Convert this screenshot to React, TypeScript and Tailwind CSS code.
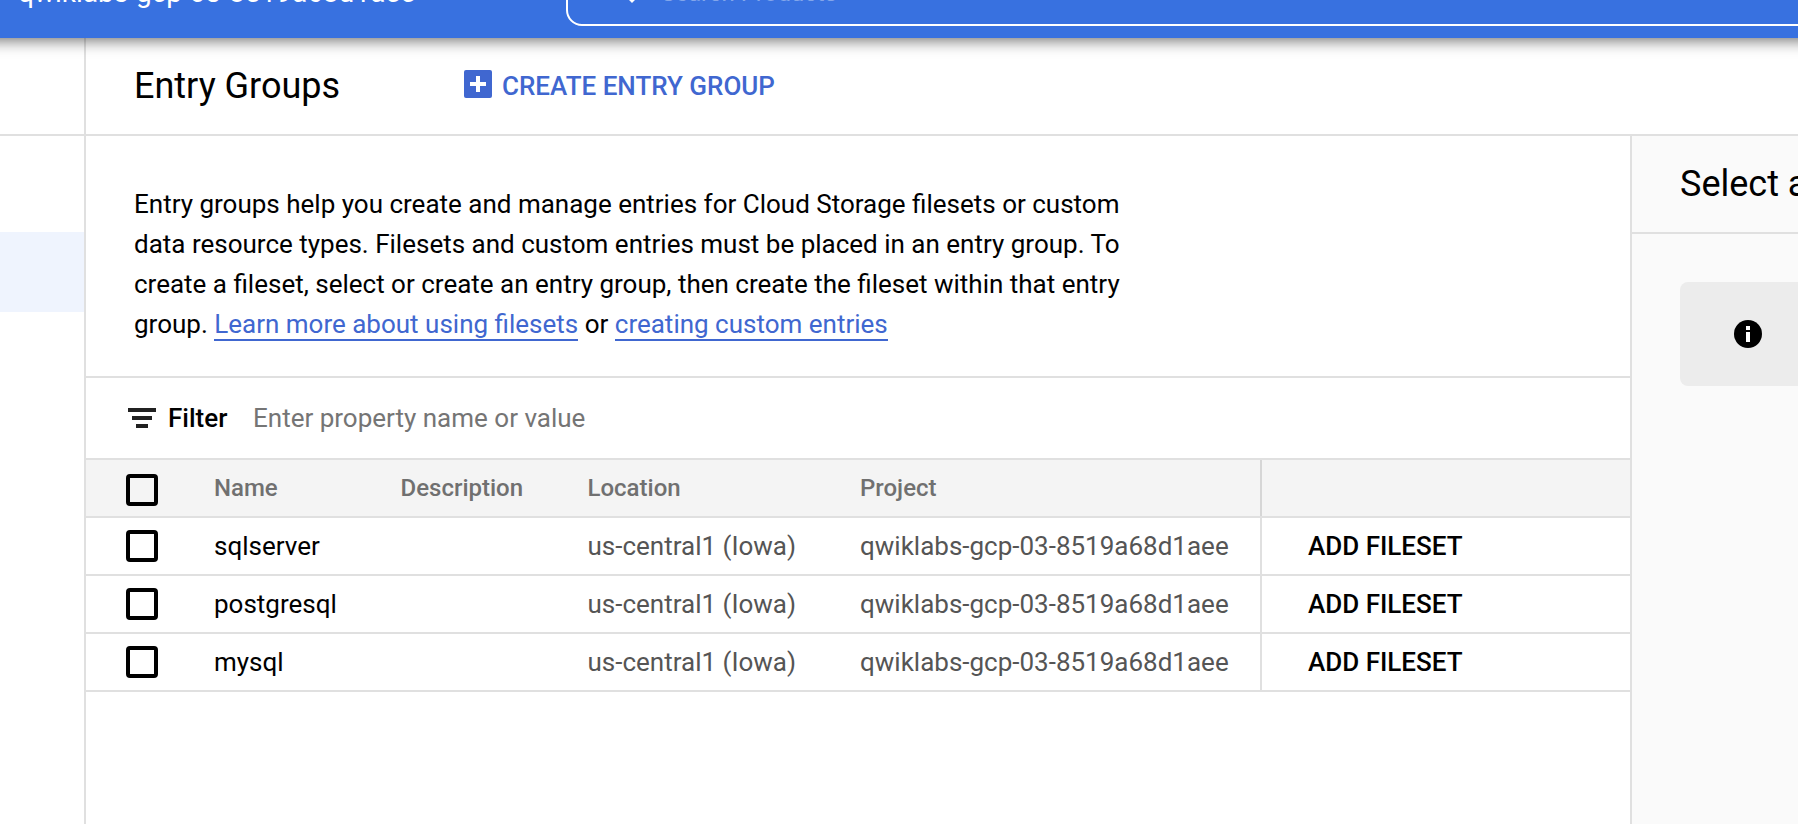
const rows = ["sqlserver", "postgresql", "mysql"];

function Checkbox() {
  return (
    <span
      role="checkbox"
      aria-checked="false"
      className="block size-8 shrink-0 rounded-[4px] border-4 border-black"
    />
  );
}

function TopBar() {
  return (
    <header className="z-10 -mx-8 flex h-[38px] shrink-0 bg-[#3871e0] px-8 shadow-[0_2px_16px_rgba(0,0,0,0.6)]">
      <div className="w-[566px] shrink-0 pl-[18px]">
        <div className="-mt-[23px] text-[28px] leading-[32px] whitespace-nowrap text-white">
          qwiklabs-gcp-03-8519a68d1aee
        </div>
      </div>
      <div className="-mt-[46px] -mr-13 flex h-[72px] flex-1 rounded-2xl border-2 border-white pl-[26px]">
        <svg className="mt-[6px] size-12 shrink-0" viewBox="0 0 24 24" fill="#fff">
          <path d="M15.5 14h-.79l-.28-.27A6.47 6.47 0 0 0 16 9.5 6.5 6.5 0 1 0 9.5 16c1.61 0 3.09-.59 4.23-1.57l.27.28v.79l5 4.99L20.49 19l-4.99-5zm-6 0a4.5 4.5 0 1 1 0-9 4.5 4.5 0 0 1 0 9z" />
        </svg>
        <span className="mt-[21px] ml-[19px] text-[24px] leading-[32px] whitespace-nowrap text-white/40">
          Search Products
        </span>
      </div>
    </header>
  );
}

function EntryTable() {
  return (
    <section>
      <div className="flex h-[58px] border-b-2 border-[#e0e0e0] bg-[#f4f4f4] text-[24px] leading-[56px] font-medium text-[#707070]">
        <div className="w-[128px] shrink-0 pt-[14px] pl-[40px]">
          <Checkbox />
        </div>
        <div className="w-[186.5px] shrink-0">Name</div>
        <div className="w-[187px] shrink-0">Description</div>
        <div className="w-[272.5px] shrink-0">Location</div>
        <div className="w-[402px] shrink-0 border-r-2 border-[#d6d6d6]">Project</div>
      </div>
      {rows.map((name) => (
        <div
          key={name}
          className="flex h-[58px] border-b-2 border-[#e0e0e0] text-[26px] leading-[57px] text-[#555]"
        >
          <div className="w-[128px] shrink-0 pt-3 pl-[40px]">
            <Checkbox />
          </div>
          <div className="w-[373.5px] shrink-0 text-black">{name}</div>
          <div className="w-[272.5px] shrink-0">us-central1 (Iowa)</div>
          <div className="w-[402px] shrink-0 border-r-2 border-[#e0e0e0]">
            qwiklabs-gcp-03-8519a68d1aee
          </div>
          <div className="pl-[46px] font-medium text-black">ADD FILESET</div>
        </div>
      ))}
    </section>
  );
}

function Link({ children }: { children: string }) {
  return (
    <a className="border-b-2 border-[#4067d0] text-[#4067d0]">{children}</a>
  );
}

export default function App() {
  return (
    <div className="flex h-[824px] w-[1798px] flex-col overflow-hidden bg-white font-[Roboto,sans-serif] text-black">
      <TopBar />
      <div className="flex min-h-0 flex-1">
        <aside className="flex w-[86px] shrink-0 flex-col border-r-2 border-[#e0e0e0]">
          <div className="h-[98px] shrink-0 border-b-2 border-[#e0e0e0]" />
          <div className="mt-24 h-20 bg-[#eff4fe]" />
        </aside>
        <div className="flex min-w-0 flex-1 flex-col">
          <div className="flex h-[98px] shrink-0 border-b-2 border-[#e0e0e0]">
            <h1 className="w-[378px] shrink-0 pl-[48px] text-[36px] leading-[96px]">Entry Groups</h1>
            <div className="flex">
              <svg className="mt-8 size-7" viewBox="0 0 28 28">
                <rect width="28" height="28" rx="2" fill="#4067d0" />
                <path d="M6 14h16M14 6v16" stroke="#fff" strokeWidth="4" />
              </svg>
              <span className="ml-[10px] text-[26px] leading-[96px] font-medium text-[#4067d0]">
                CREATE ENTRY GROUP
              </span>
            </div>
          </div>
          <div className="flex min-h-0 flex-1">
            <main className="w-[1544px] shrink-0">
              <div className="h-[242px] border-b-2 border-[#e0e0e0] pt-12 pl-[48px]">
                <p className="text-[26px] leading-10 whitespace-nowrap">
                  Entry groups help you create and manage entries for Cloud Storage filesets or custom
                  <br />
                  data resource types. Filesets and custom entries must be placed in an entry group. To
                  <br />
                  create a fileset, select or create an entry group, then create the fileset within that entry
                  <br />
                  group. <Link>Learn more about using filesets</Link> or{" "}
                  <Link>creating custom entries</Link>
                </p>
              </div>
              <div className="flex h-[82px] border-b-2 border-[#e0e0e0] pl-[42px] text-[26px] leading-[80px]">
                <svg className="mt-[30px] h-5 w-7" viewBox="0 0 28 20" fill="#212121">
                  <path d="M0 0h28v4H0zM4 8h20v4H4zM8 16h12v4H8z" />
                </svg>
                <span className="ml-[12px] w-[85px] font-medium">Filter</span>
                <span className="text-[#757575]">Enter property name or value</span>
              </div>
              <EntryTable />
            </main>
            <aside className="flex min-w-0 flex-1 flex-col overflow-hidden border-l-2 border-[#e0e0e0] bg-[#fafafa]">
              <h2 className="h-[98px] shrink-0 border-b-2 border-[#e0e0e0] pl-[48px] text-[36px] leading-[96px] whitespace-nowrap">
                Select an entry group
              </h2>
              <div className="mt-12 -mr-5 ml-[48px] h-[104px] rounded-lg bg-[#ececec] pt-[38px] pl-[54px]">
                <svg className="size-7" viewBox="0 0 28 28">
                  <circle cx="14" cy="14" r="14" />
                  <path d="M12 6h4v4h-4zM12 12h4v10h-4z" fill="#fff" />
                </svg>
              </div>
            </aside>
          </div>
        </div>
      </div>
    </div>
  );
}
